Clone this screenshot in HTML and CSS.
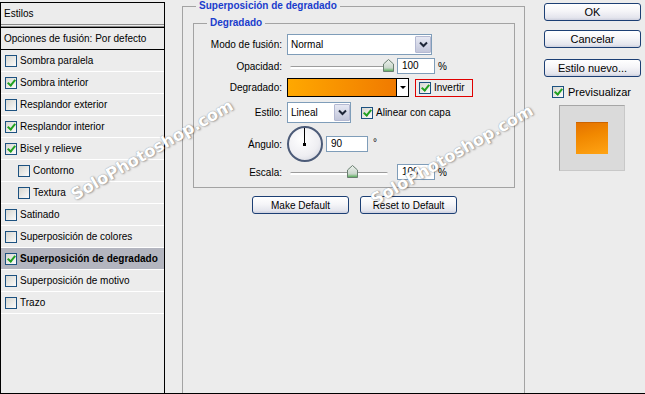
FILE: index.html
```html
<!DOCTYPE html>
<html lang="es">
<head>
    <meta charset="UTF-8">
    <meta name="viewport" content="width=device-width, initial-scale=1.0">
    <title>Estilo de capa</title>
    <link rel="stylesheet" href="styles.css">
</head>
<body>
    <div class="dialog">
        <div class="styles-panel">
            <div class="styles-head">Estilos</div>
            <div class="styles-blend">Opciones de fusión: Por defecto</div>
            <ul class="effects">
                <li><span class="cb"></span>Sombra paralela</li>
                <li><span class="cb on"></span>Sombra interior</li>
                <li><span class="cb"></span>Resplandor exterior</li>
                <li><span class="cb on"></span>Resplandor interior</li>
                <li><span class="cb on"></span>Bisel y relieve</li>
                <li class="sub"><span class="cb"></span>Contorno</li>
                <li class="sub"><span class="cb"></span>Textura</li>
                <li><span class="cb"></span>Satinado</li>
                <li><span class="cb"></span>Superposición de colores</li>
                <li class="active"><span class="cb on"></span>Superposición de degradado</li>
                <li><span class="cb"></span>Superposición de motivo</li>
                <li><span class="cb"></span>Trazo</li>
            </ul>
        </div>

        <div class="settings">
            <fieldset class="group outer">
                <legend>Superposición de degradado</legend>
                <fieldset class="group inner">
                    <legend>Degradado</legend>

                    <div class="row r-mode">
                        <span class="label">Modo de fusión:</span>
                        <div class="select mode">
                            <span class="select-text">Normal</span>
                            <span class="drop"><svg width="9" height="7" viewBox="0 0 9 7"><path d="M1 1.5 L4.5 5 L8 1.5" stroke="#1e2638" stroke-width="2" fill="none"/></svg></span>
                        </div>
                    </div>

                    <div class="row r-opacity">
                        <span class="label">Opacidad:</span>
                        <div class="slider">
                            <svg class="thumb" style="left: 96px" width="11" height="13" viewBox="0 0 11 13">
                                <defs><linearGradient id="th1" x1="0" y1="0" x2="0" y2="1"><stop offset="0" stop-color="#eef2ee"/><stop offset="0.7" stop-color="#c9d6cb"/><stop offset="1" stop-color="#4caa4c"/></linearGradient></defs>
                                <path d="M0.5 5 L5.5 0.5 L10.5 5 V12.5 H0.5 Z" fill="url(#th1)" stroke="#6a7f70"/>
                            </svg>
                        </div>
                        <span class="num">100</span>
                        <span class="unit">%</span>
                    </div>

                    <div class="row r-gradient">
                        <span class="label">Degradado:</span>
                        <div class="gradient-pick">
                            <span class="gradient-bar"></span>
                            <span class="gradient-drop"></span>
                        </div>
                        <label class="invert"><span class="cb on"></span>Invertir</label>
                    </div>

                    <div class="row r-style">
                        <span class="label">Estilo:</span>
                        <div class="select style">
                            <span class="select-text">Lineal</span>
                            <span class="drop"><svg width="9" height="7" viewBox="0 0 9 7"><path d="M1 1.5 L4.5 5 L8 1.5" stroke="#1e2638" stroke-width="2" fill="none"/></svg></span>
                        </div>
                        <label class="check align"><span class="cb on"></span>Alinear con capa</label>
                    </div>

                    <div class="row r-angle">
                        <span class="label">Ángulo:</span>
                        <div class="dial"></div>
                        <span class="num angle">90</span>
                        <span class="degree">°</span>
                    </div>

                    <div class="row r-scale">
                        <span class="label">Escala:</span>
                        <div class="slider">
                            <svg class="thumb" style="left: 60px" width="11" height="13" viewBox="0 0 11 13">
                                <defs><linearGradient id="th2" x1="0" y1="0" x2="0" y2="1"><stop offset="0" stop-color="#eef2ee"/><stop offset="0.7" stop-color="#c9d6cb"/><stop offset="1" stop-color="#4caa4c"/></linearGradient></defs>
                                <path d="M0.5 5 L5.5 0.5 L10.5 5 V12.5 H0.5 Z" fill="url(#th2)" stroke="#6a7f70"/>
                            </svg>
                        </div>
                        <span class="num">100</span>
                        <span class="unit">%</span>
                    </div>
                </fieldset>

                <div class="defaults">
                    <button class="btn">Make Default</button>
                    <button class="btn">Reset to Default</button>
                </div>
            </fieldset>
        </div>

        <div class="actions">
            <button class="btn">OK</button>
            <button class="btn cancel">Cancelar</button>
            <button class="btn new-style">Estilo nuevo...</button>
            <label class="check preview-toggle"><span class="cb on"></span>Previsualizar</label>
            <div class="preview"><div class="swatch"></div></div>
        </div>

        <div class="watermark wm-left">SoloPhotoshop.com</div>
        <div class="watermark wm-right">SoloPhotoshop.com</div>
    </div>
</body>
</html>
```

FILE: styles.css
```css
body {
    margin: 0;
    background-color: #ececec;
    font-family: "Liberation Sans", Arial, sans-serif;
    font-size: 10px;
    color: #000;
}

.dialog {
    position: relative;
    display: flex;
    height: 393px;
    border-bottom: 1px solid #000;
    overflow: hidden;
}

/* left list */
.styles-panel {
    width: 165px;
    flex-shrink: 0;
    box-sizing: border-box;
    margin-top: 2px;
    border: 1px solid #000;
    border-bottom: 0;
}

.styles-head {
    height: 21px;
    line-height: 21px;
    padding-left: 3px;
    border-bottom: 3px double #8a8a8a;
}

.styles-blend {
    height: 21px;
    line-height: 21px;
    padding-left: 3px;
    border-top: 1px solid #000;
    border-bottom: 1px solid #000;
}

.effects {
    list-style: none;
    margin: 0;
    padding: 0;
}

.effects li {
    display: flex;
    align-items: center;
    height: 21px;
    padding-left: 4px;
    border-bottom: 1px solid #fff;
}

.effects li.sub {
    padding-left: 17px;
}

.effects li.active {
    background-color: #b3b5bf;
    font-weight: bold;
}

.cb {
    position: relative;
    flex-shrink: 0;
    width: 12px;
    height: 12px;
    box-sizing: border-box;
    margin-right: 3px;
    border: 1px solid #1c5180;
    background: linear-gradient(135deg, #d6d6d0, #fbfbfb);
}

.cb.on::after {
    content: "";
    position: absolute;
    left: 3px;
    top: 0;
    width: 3px;
    height: 6px;
    border: solid #21a121;
    border-width: 0 2px 2px 0;
    transform: rotate(40deg);
}

/* middle settings */
.settings {
    width: 375px;
    flex-shrink: 0;
    box-sizing: border-box;
    padding-left: 17px;
}

.group {
    margin: 0;
    min-width: 0;
    box-sizing: border-box;
    border: 1px solid #a3a3a3;
}

.group legend {
    padding: 0 3px;
    line-height: 12px;
    font-weight: bold;
    color: #1b3dcc;
}

.outer {
    width: 343px;
    height: 420px;
    padding: 5px 10px 0;
}

.outer > legend {
    margin-left: 3px;
}

.inner {
    width: 322px;
    padding: 5px 0 7px;
}

.inner > legend {
    margin-left: 13px;
}

.row {
    display: flex;
    align-items: center;
}

.label {
    flex-shrink: 0;
    width: 88px;
    margin-right: 5px;
    text-align: right;
}

.r-mode { height: 21px; }
.r-opacity { height: 16px; margin-top: 3px; }
.r-gradient { height: 19px; margin-top: 4px; }
.r-style { height: 21px; margin-top: 5px; }
.r-angle { height: 36px; margin-top: 3px; }
.r-scale { height: 16px; margin-top: 2px; }

.select {
    display: flex;
    align-items: center;
    height: 21px;
    box-sizing: border-box;
    border: 1px solid #7f9db9;
    background-color: #fff;
}

.select.mode { width: 145px; }
.select.style { width: 64px; }

.select-text {
    padding-left: 3px;
}

.drop {
    display: flex;
    align-items: center;
    justify-content: center;
    width: 16px;
    height: 17px;
    box-sizing: border-box;
    margin: 1px 0 1px auto;
    border: 1px solid #b4b9d2;
    border-radius: 1px;
    background: linear-gradient(#e6e8f3, #c2c6da);
}

.slider {
    position: relative;
    width: 107px;
    height: 16px;
    margin-right: 3px;
}

.slider::before {
    content: "";
    position: absolute;
    left: 3px;
    right: 6px;
    top: 8px;
    height: 2px;
    border-top: 1px solid #9c9c9c;
    border-radius: 2px;
    background-color: #fff;
}

.thumb {
    position: absolute;
    top: 1px;
}

.num {
    width: 38px;
    height: 16px;
    box-sizing: border-box;
    padding-left: 4px;
    line-height: 14px;
    border: 1px solid #7f9db9;
    background-color: #fff;
}

.unit {
    margin-left: 3px;
}

.gradient-pick {
    display: flex;
    width: 122px;
    height: 19px;
    box-sizing: border-box;
    border: 1px solid #000;
}

.gradient-bar {
    flex: 1;
    border-right: 1px solid #000;
    background: linear-gradient(to right, #ffa800, #f07a00);
}

.gradient-drop {
    display: flex;
    align-items: center;
    justify-content: center;
    width: 11px;
    background-color: #fff;
}

.gradient-drop::after {
    content: "";
    border-left: 3px solid transparent;
    border-right: 3px solid transparent;
    border-top: 3px solid #000;
}

.invert {
    display: flex;
    align-items: center;
    width: 58px;
    height: 18px;
    box-sizing: border-box;
    margin-left: 6px;
    padding-left: 3px;
    border: 1px solid #e00000;
}

.check {
    display: flex;
    align-items: center;
}

.check.align {
    margin-left: 10px;
}

.dial {
    position: relative;
    width: 36px;
    height: 36px;
    box-sizing: border-box;
    border: 2px solid #4c5b78;
    border-radius: 50%;
    background: radial-gradient(circle at 40% 35%, #fff 0%, #eeeef2 60%, #c9cdd9 100%);
}

.dial::before {
    content: "";
    position: absolute;
    left: 15px;
    top: 0;
    width: 1px;
    height: 16px;
    background-color: #000;
}

.dial::after {
    content: "";
    position: absolute;
    left: 14px;
    top: 15px;
    width: 3px;
    height: 3px;
    background-color: #000;
}

.num.angle {
    width: 42px;
    margin-left: 3px;
}

.degree {
    margin-left: 5px;
    margin-bottom: 4px;
}

.defaults {
    display: flex;
    gap: 11px;
    margin-top: 8px;
    padding-left: 59px;
}

.btn {
    height: 18px;
    box-sizing: border-box;
    padding: 0;
    font: inherit;
    color: #000;
    border: 1px solid #1c3f74;
    border-radius: 3px;
    background: linear-gradient(#ffffff 0%, #f5f5f8 45%, #e4e5ed 85%, #cdd0de 100%);
}

.defaults .btn {
    width: 97px;
}

/* right column */
.actions {
    display: flex;
    flex-direction: column;
    align-items: flex-start;
    width: 105px;
    box-sizing: border-box;
    padding: 3px 0 0 4px;
    font-size: 11px;
}

.actions .btn {
    width: 97px;
}

.actions .cancel {
    margin-top: 9px;
}

.actions .new-style {
    margin-top: 11px;
}

.preview-toggle {
    margin: 9px 0 0 8px;
}

.preview-toggle .cb {
    margin-right: 4px;
}

.preview {
    display: flex;
    align-items: center;
    justify-content: center;
    width: 66px;
    height: 66px;
    box-sizing: border-box;
    margin: 7px 0 0 15px;
    border: 1px solid #a6a6a6;
    border-right-color: #c8c8c8;
    border-bottom-color: #c8c8c8;
    background-color: #dadada;
}

.swatch {
    width: 32px;
    height: 32px;
    box-sizing: border-box;
    border-top: 1px solid #cc6400;
    background: linear-gradient(165deg, #e47200 0%, #f18800 40%, #ffa414 100%);
}

/* watermark over the dialog */
.watermark {
    position: absolute;
    font-family: "DejaVu Sans", sans-serif;
    font-size: 16.5px;
    font-weight: bold;
    color: #fff;
    white-space: nowrap;
    text-shadow: 0 0 1px #8a8a8a, 1px 1px 2px rgba(0, 0, 0, 0.35);
    transform: translate(-50%, -50%) rotate(-30deg);
    pointer-events: none;
}

.wm-left {
    left: 152px;
    top: 150px;
}

.wm-right {
    left: 452px;
    top: 155px;
}
```
